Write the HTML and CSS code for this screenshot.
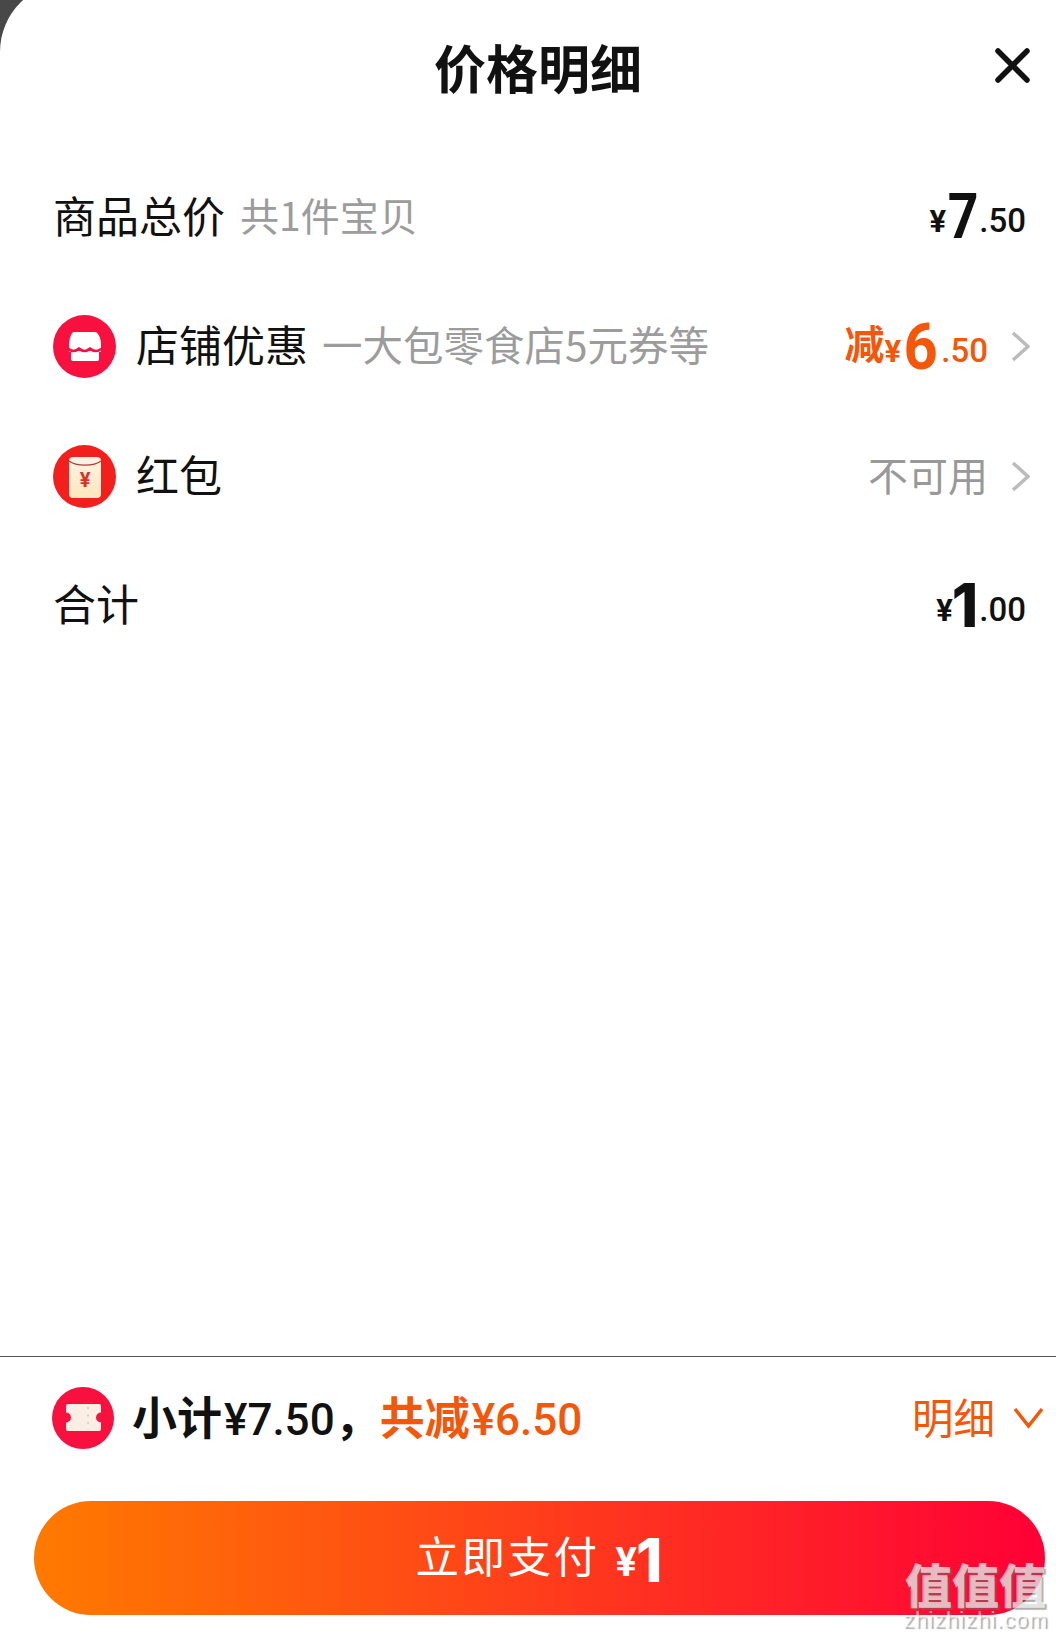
FILE: index.html
```html
<!DOCTYPE html>
<html lang="zh-CN">
<head>
  <meta charset="UTF-8" />
  <meta name="viewport" content="width=device-width, initial-scale=1.0"/>
  <title>价格明细</title>
  <link rel="stylesheet" href="styles.css">
</head>
<body>

<div class="sheet">
  <header class="head">
    <span></span>
    <h2>价格明细</h2>
    <svg class="close" viewBox="0 0 35 35"><path d="M3 3L32 32M32 3L3 32"/></svg>
  </header>

  <div class="row">
    <span class="name">商品总价</span>
    <span class="sub sub-first">共1件宝贝</span>
    <span class="price price-end"><i class="yen">¥</i><b class="big">7</b><i class="cents">.50</i></span>
  </div>

  <div class="row">
    <svg class="ic" viewBox="0 0 63 63">
      <circle cx="31.5" cy="31.5" r="31.5" fill="#f8103f"/>
      <path fill="#fff" d="M21 17H42C44 17 46 20 47 23C48 26 48 29 48 33V37H16V33C16 29 16 26 17 23C18 20 19 17 21 17Z"/>
      <path fill="#fff" d="M18 37H46V44C46 45.500 45 46 44 46H20C19 46 18 45.500 18 44Z"/>
      <path fill="none" stroke="#f8103f" stroke-width="2.400" d="M15 33.500Q20.500 38.500 26 33.500Q31.500 38.500 37 33.500Q42.500 38.500 49 33.500"/>
    </svg>
    <span class="name">店铺优惠</span>
    <span class="sub">一大包零食店5元券等</span>
    <span class="price orange"><em class="tag">减</em><i class="yen">¥</i><b class="big big-6">6</b><i class="cents">.50</i></span>
    <svg class="chev" viewBox="0 0 19 31"><path d="M2 2L17 15.500L2 29"/></svg>
  </div>

  <div class="row">
    <svg class="ic" viewBox="0 0 63 63">
      <defs>
        <linearGradient id="packet" x1="0" y1="0" x2="0" y2="1">
          <stop offset="0" stop-color="#fdf3e6"/>
          <stop offset="1" stop-color="#fde6bd"/>
        </linearGradient>
      </defs>
      <circle cx="31.500" cy="31.500" r="31.500" fill="#f21f1d"/>
      <rect x="16" y="12" width="32" height="41" rx="4" fill="url(#packet)"/>
      <path d="M16 16C23 21.500 41 21.500 48 16" fill="none" stroke="#b53a30" stroke-width="1.200"/>
      <text class="packet-yen" x="32" y="42" text-anchor="middle">¥</text>
    </svg>
    <span class="name">红包</span>
    <span class="muted">不可用</span>
    <svg class="chev" viewBox="0 0 19 31"><path d="M2 2L17 15.500L2 29"/></svg>
  </div>

  <div class="row">
    <span class="name">合计</span>
    <span class="price price-end"><i class="yen">¥</i><b class="big big-1">1</b><i class="cents">.00</i></span>
  </div>

  <footer class="foot">
    <div class="summary">
      <svg class="ic-ticket" viewBox="0 0 62 62">
        <circle cx="31" cy="31" r="31" fill="#f8103f"/>
        <path fill="#fbeee4" d="M16 17H47a2 2 0 0 1 2 2V25.500a5 5 0 0 0 0 10V42a2 2 0 0 1-2 2H16a2 2 0 0 1-2-2V35.500a5 5 0 0 0 0-10V19a2 2 0 0 1 2-2Z"/>
        <path d="M36 20V43" stroke="#d9c6bc" stroke-width="1.600" stroke-dasharray="2 5.500" fill="none"/>
      </svg>
      <span class="total">小计<span class="num">¥7.50</span>，</span>
      <span class="total orange">共减<span class="num">¥6.50</span></span>
      <span class="detail">明细</span>
      <svg class="chev-down" viewBox="0 0 31 22"><path d="M2 2L15.500 19L29 2"/></svg>
    </div>
    <button class="pay" type="button"><span class="pay-text">立即支付</span><span class="pay-price"><i class="yen">¥</i><b class="big big-1">1</b></span></button>
    <div class="mark">
      <div class="mark-cn">值值值</div>
      <div class="mark-en">zhizhizhi.com</div>
    </div>
  </footer>
</div>

</body>
</html>
```

FILE: styles.css
```css
html, body {
  height: 100%;
}
body {
  margin: 0;
  background: #484848;
  font-family: "Noto Sans CJK SC", sans-serif;
  overflow: hidden;
  color: #111;
}
.sheet {
  display: flex;
  flex-direction: column;
  height: calc(100vh + 18px);
  margin-top: -18px;
  background: white;
  border-top-left-radius: 70px;
  position: relative;
}
.head {
  display: grid;
  grid-template-columns: 1fr auto 1fr;
  align-items: center;
  height: 137px;
  padding: 18px 26px 16px 46px;
}
.head h2 {
  margin: 0 0 4px;
  font-size: 52px;
  line-height: 70px;
  font-weight: 700;
}
.close {
  justify-self: end;
  width: 35px;
  height: 35px;
  margin-top: -6px;
  fill: none;
  stroke: #111;
  stroke-width: 5.500;
  stroke-linecap: round;
}
.row {
  display: flex;
  align-items: center;
  height: 129.300px;
  padding: 0 26px 0 53px;
}
.ic {
  width: 63px;
  height: 63px;
  margin-right: 20px;
}
.packet-yen {
  font-family: Roboto, sans-serif;
  font-size: 20px;
  font-weight: 700;
  fill: #d83128;
}
.name {
  margin-bottom: 7px;
  font-size: 43px;
  line-height: 60px;
}
.sub {
  margin: 0 0 5px 14px;
  font-size: 40.500px;
  line-height: 60px;
  color: #9c9c9c;
}
.sub-first {
  margin: 0 0 7px 15px;
  font-size: 39px;
}
.muted {
  margin: 0 0 5px auto;
  font-size: 40px;
  color: #999;
}
.price {
  margin: 0 0 2px auto;
  display: flex;
  align-items: baseline;
  font-family: Roboto, sans-serif;
  line-height: 70px;
}
.price-end {
  padding-right: 4px;
}
.price i, .pay-price i {
  font-style: normal;
}
.yen {
  font-family: Roboto, sans-serif;
  font-size: 31px;
  font-weight: 700;
}
.big {
  display: inline-block;
  margin: 0 -2px 0 -1px;
  font-size: 63px;
  font-weight: 700;
  transform: translateY(6px) scaleX(0.85);
}
.big-6 {
  margin: 0 2px 0 1px;
  font-size: 65px;
  transform: translateY(7px) scaleX(0.92);
}
.big-1 {
  margin: 0 1px 0 -1px;
  font-family: Inter, sans-serif;
  font-size: 60px;
  font-weight: 800;
  transform: translateY(6px);
}
.cents {
  font-size: 33px;
  font-weight: 500;
}
.tag {
  font-style: normal;
  font-family: "Noto Sans CJK SC", sans-serif;
  font-size: 40px;
  font-weight: 700;
  transform: translateY(-3px);
}
.orange {
  color: #f4560a;
}
.chev {
  width: 19px;
  height: 31px;
  margin-left: 23px;
  fill: none;
  stroke: #bbb;
  stroke-width: 3.500;
}
.foot {
  margin-top: auto;
  position: relative;
  border-top: 1px solid #555;
  padding: 0 11px 24px 34px;
}
.summary {
  display: flex;
  align-items: center;
  height: 122px;
  margin-bottom: 22px;
  padding-left: 18px;
}
.ic-ticket {
  width: 62px;
  height: 62px;
  margin-right: 18px;
}
.total {
  font-size: 45px;
  font-weight: 700;
  line-height: 60px;
}
.num {
  margin-left: 2px;
  font-family: Roboto, sans-serif;
  font-size: 44px;
  font-weight: 500;
}
.detail {
  margin: 0 0 5px auto;
  font-size: 41.500px;
  color: #f4560a;
}
.chev-down {
  width: 31px;
  height: 22px;
  margin: 0 1px 0 18px;
  fill: none;
  stroke: #f4560a;
  stroke-width: 3.500;
}
.pay {
  display: flex;
  align-items: center;
  justify-content: center;
  width: 100%;
  height: 114px;
  padding: 0;
  border: none;
  border-radius: 57px;
  background: linear-gradient(90deg, #ff7a00, #ff0036);
  color: white;
  font-family: "Noto Sans CJK SC", sans-serif;
  font-size: 43.500px;
}
.pay-text {
  margin-bottom: 7px;
  letter-spacing: 2.500px;
}
.pay-price {
  display: flex;
  align-items: baseline;
  margin: 0 0 8px 16px;
  font-family: Roboto, sans-serif;
}
.pay-price .yen {
  font-size: 40px;
  font-weight: 700;
}
.mark {
  position: absolute;
  right: 8px;
  bottom: 8px;
  text-align: center;
  color: rgba(255, 255, 255, 0.68);
  text-shadow: 2px 2px 1px rgba(110, 110, 110, 0.55);
}
.mark-cn {
  font-size: 47px;
  line-height: 52px;
  font-weight: 900;
}
.mark-en {
  font-family: "Liberation Sans", sans-serif;
  font-size: 22px;
  line-height: 22px;
  letter-spacing: 1px;
}
```
